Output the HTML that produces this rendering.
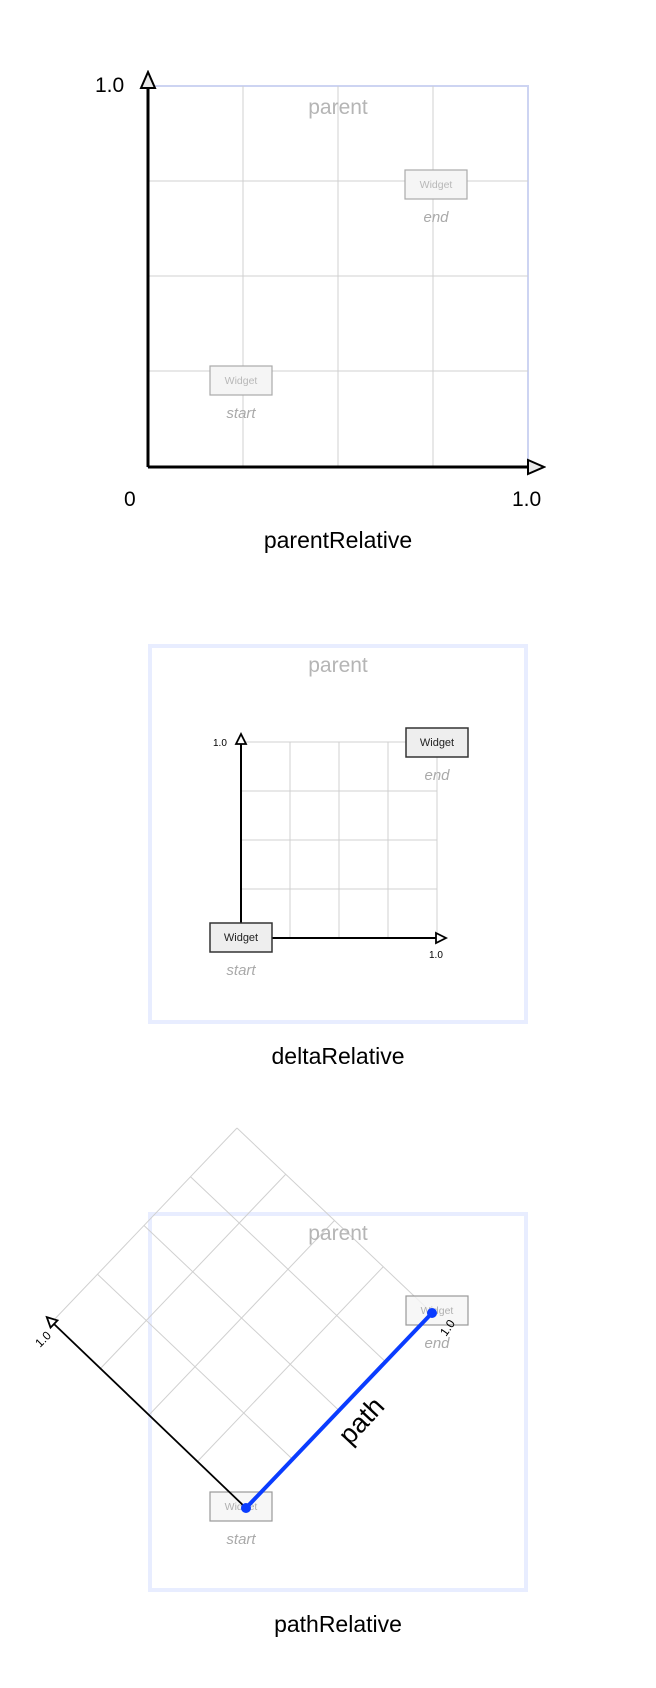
<!DOCTYPE html>
<html><head><meta charset="utf-8"><style>
html,body{margin:0;padding:0;background:#fff;width:656px;height:1688px;overflow:hidden}
svg{display:block;font-family:"Liberation Sans",sans-serif}
</style></head><body>
<svg width="656" height="1688" viewBox="0 0 656 1688" xmlns="http://www.w3.org/2000/svg">
<defs>
<marker id="ar" viewBox="0 0 20 20" refX="2" refY="10" markerWidth="20" markerHeight="20" markerUnits="userSpaceOnUse" orient="auto">
<path d="M2,3 L18,10 L2,17 Z" fill="#e8e8e8" stroke="#000" stroke-width="2"/>
</marker>
<marker id="ar2" viewBox="0 0 14 14" refX="2" refY="7" markerWidth="14" markerHeight="14" markerUnits="userSpaceOnUse" orient="auto">
<path d="M2,2 L12,7 L2,12 Z" fill="#fff" stroke="#000" stroke-width="1.8"/>
</marker>
</defs>

<!-- Section 1 -->
<rect x="148" y="86" width="380" height="381" fill="none" stroke="#cdd4f2" stroke-width="2"/>
<g stroke="#d0d0d0" stroke-width="1">
<line x1="243" y1="86" x2="243" y2="467"/><line x1="338" y1="86" x2="338" y2="467"/><line x1="433" y1="86" x2="433" y2="467"/>
<line x1="148" y1="181" x2="528" y2="181"/><line x1="148" y1="276" x2="528" y2="276"/><line x1="148" y1="371" x2="528" y2="371"/>
</g>
<text x="338" y="114" font-size="21" fill="#b5b5b5" text-anchor="middle">parent</text>
<rect x="405" y="170" width="62" height="29" fill="#f5f5f5" stroke="#aaa" stroke-width="1.2"/>
<text x="436" y="188" font-size="10.5" fill="#b8b8b8" text-anchor="middle">Widget</text>
<text x="436" y="222" font-size="15" fill="#aaa" font-style="italic" text-anchor="middle">end</text>
<rect x="210" y="366" width="62" height="29" fill="#f5f5f5" stroke="#aaa" stroke-width="1.2"/>
<text x="241" y="384" font-size="10.5" fill="#b8b8b8" text-anchor="middle">Widget</text>
<text x="241" y="418" font-size="15" fill="#aaa" font-style="italic" text-anchor="middle">start</text>
<line x1="148" y1="467" x2="148" y2="88" stroke="#000" stroke-width="3" marker-end="url(#ar)"/>
<line x1="148" y1="467" x2="528" y2="467" stroke="#000" stroke-width="3" marker-end="url(#ar)"/>
<text x="95" y="92" font-size="21" fill="#000">1.0</text>
<text x="124" y="506" font-size="21" fill="#000">0</text>
<text x="512" y="506" font-size="21" fill="#000">1.0</text>
<text x="338" y="548" font-size="23" fill="#000" text-anchor="middle">parentRelative</text>

<!-- Section 2 -->
<rect x="150" y="646" width="376" height="376" fill="none" stroke="#e8edff" stroke-width="4"/>
<text x="338" y="672" font-size="21" fill="#b5b5b5" text-anchor="middle">parent</text>
<g stroke="#d0d0d0" stroke-width="1">
<line x1="290" y1="742" x2="290" y2="938"/><line x1="339" y1="742" x2="339" y2="938"/><line x1="388" y1="742" x2="388" y2="938"/><line x1="437" y1="742" x2="437" y2="938"/>
<line x1="241" y1="742" x2="437" y2="742"/><line x1="241" y1="791" x2="437" y2="791"/><line x1="241" y1="840" x2="437" y2="840"/><line x1="241" y1="889" x2="437" y2="889"/>
</g>
<line x1="241" y1="925" x2="241" y2="744" stroke="#000" stroke-width="2" marker-end="url(#ar2)"/>
<line x1="272" y1="938" x2="436" y2="938" stroke="#000" stroke-width="2" marker-end="url(#ar2)"/>
<rect x="406" y="728" width="62" height="29" fill="#eee" stroke="#333" stroke-width="1.5"/>
<text x="437" y="746" font-size="11" fill="#222" text-anchor="middle">Widget</text>
<text x="437" y="780" font-size="15" fill="#aaa" font-style="italic" text-anchor="middle">end</text>
<rect x="210" y="923" width="62" height="29" fill="#eee" stroke="#333" stroke-width="1.5"/>
<text x="241" y="941" font-size="11" fill="#222" text-anchor="middle">Widget</text>
<text x="241" y="975" font-size="15" fill="#aaa" font-style="italic" text-anchor="middle">start</text>
<text x="213" y="746" font-size="10" fill="#000">1.0</text>
<text x="429" y="958" font-size="10" fill="#000">1.0</text>
<text x="338" y="1064" font-size="23" fill="#000" text-anchor="middle">deltaRelative</text>

<!-- Section 3 -->
<rect x="150" y="1214" width="376" height="376" fill="none" stroke="#e8edff" stroke-width="4"/>
<g transform="matrix(186,-195,-195,-185,246,1508)" stroke="#d0d0d0" stroke-width="1" fill="none">
<line x1="0" y1="0.25" x2="1" y2="0.25" vector-effect="non-scaling-stroke"/>
<line x1="0" y1="0.5" x2="1" y2="0.5" vector-effect="non-scaling-stroke"/>
<line x1="0" y1="0.75" x2="1" y2="0.75" vector-effect="non-scaling-stroke"/>
<line x1="0" y1="1" x2="1" y2="1" vector-effect="non-scaling-stroke"/>
<line x1="0.25" y1="0" x2="0.25" y2="1" vector-effect="non-scaling-stroke"/>
<line x1="0.5" y1="0" x2="0.5" y2="1" vector-effect="non-scaling-stroke"/>
<line x1="0.75" y1="0" x2="0.75" y2="1" vector-effect="non-scaling-stroke"/>
<line x1="1" y1="0" x2="1" y2="1" vector-effect="non-scaling-stroke"/>
</g>
<text x="338" y="1240" font-size="21" fill="#b5b5b5" text-anchor="middle">parent</text>
<rect x="406" y="1296" width="62" height="29" fill="#f5f5f5" fill-opacity="0.8" stroke="#999" stroke-width="1.2"/>
<text x="437" y="1314" font-size="10.5" fill="#b0b0b0" text-anchor="middle">Widget</text>
<text x="437" y="1348" font-size="15" fill="#aaa" font-style="italic" text-anchor="middle">end</text>
<rect x="210" y="1492" width="62" height="29" fill="#f5f5f5" fill-opacity="0.8" stroke="#999" stroke-width="1.2"/>
<text x="241" y="1510" font-size="10.5" fill="#b0b0b0" text-anchor="middle">Widget</text>
<text x="241" y="1544" font-size="15" fill="#aaa" font-style="italic" text-anchor="middle">start</text>
<line x1="246" y1="1508" x2="54" y2="1324" stroke="#000" stroke-width="1.8" marker-end="url(#ar2)"/>
<line x1="246" y1="1508" x2="432" y2="1313" stroke="#0a3cff" stroke-width="4"/>
<circle cx="246" cy="1508" r="5" fill="#0a3cff"/>
<circle cx="432" cy="1313" r="5" fill="#0a3cff"/>
<text transform="translate(40,1348) rotate(-45)" font-size="12" fill="#000">1.0</text>
<text transform="translate(446,1337) rotate(-55)" font-size="12" fill="#000">1.0</text>
<text transform="translate(350,1446) rotate(-47)" font-size="27" fill="#000">path</text>
<text x="338" y="1632" font-size="23" fill="#000" text-anchor="middle">pathRelative</text>
</svg>
</body></html>
